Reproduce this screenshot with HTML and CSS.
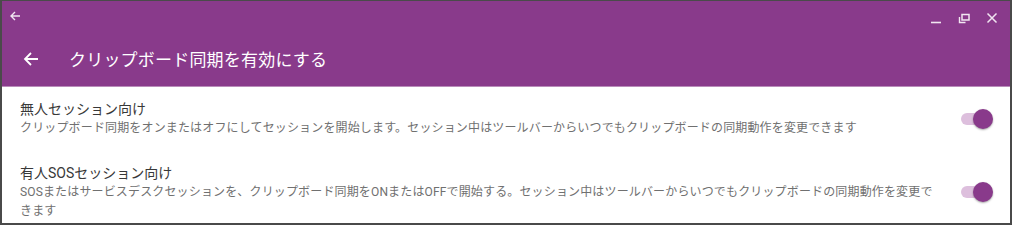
FILE: index.html
```html
<!DOCTYPE html>
<html lang="ja">
<head>
<meta charset="utf-8">
<link rel="stylesheet" href="styles.css">
</head>
<body>
<div class="window">
  <header class="header">
    <div class="titlebar">
      <svg class="tb-back" width="12" height="12" viewBox="0 0 12 12"><path d="M11 6H2M6 2L2 6l4 4" fill="none" stroke="#f1e6f1" stroke-width="1.4"/></svg>
      <div class="controls">
        <svg width="14" height="14" viewBox="0 0 14 14"><path d="M2 11.5h10" stroke="#f1e6f1" stroke-width="1.6"/></svg>
        <svg width="14" height="14" viewBox="0 0 14 14"><path d="M5 3.5h7v5.5H5z" fill="none" stroke="#f1e6f1" stroke-width="1.5"/><path d="M2.5 6v5.5h6" fill="none" stroke="#f1e6f1" stroke-width="1.4"/></svg>
        <svg width="14" height="14" viewBox="0 0 14 14"><path d="M2.5 2.5l9 9M11.5 2.5l-9 9" stroke="#f1e6f1" stroke-width="1.5"/></svg>
      </div>
    </div>
    <div class="appbar">
      <svg class="ab-back" width="16" height="16" viewBox="0 0 16 16"><path d="M15 8H2M8 2L2 8l6 6" fill="none" stroke="#fff" stroke-width="1.8"/></svg>
      <h1 class="title">クリップボード同期を有効にする</h1>
    </div>
  </header>
  <main class="list">
    <div class="item">
      <div class="text">
        <div class="item-title">無人セッション向け</div>
        <div class="item-desc">クリップボード同期をオンまたはオフにしてセッションを開始します。セッション中はツールバーからいつでもクリップボードの同期動作を変更できます</div>
      </div>
      <div class="switch"><span class="track"></span><span class="thumb"></span></div>
    </div>
    <div class="item">
      <div class="text">
        <div class="item-title">有人SOSセッション向け</div>
        <div class="item-desc">SOSまたはサービスデスクセッションを、クリップボード同期をONまたはOFFで開始する。セッション中はツールバーからいつでもクリップボードの同期動作を変更できます</div>
      </div>
      <div class="switch"><span class="track"></span><span class="thumb"></span></div>
    </div>
  </main>
</div>
</body>
</html>
```
FILE: styles.css
```css
* { box-sizing: border-box; }
html, body { margin: 0; padding: 0; background: #fff; }
body {
  font-family: Roboto, "Noto Sans CJK JP", sans-serif;
  width: 1012px;
  height: 225px;
  overflow: hidden;
}
.window {
  width: 1012px;
  height: 225px;
  border: 2px solid #4a4a4a;
  border-top-width: 1px;
  display: flex;
  flex-direction: column;
  background: #fff;
}
.header {
  background: #893a8b;
  border-bottom: 1px solid #b98cba;
  height: 86px;
  flex: none;
  display: flex;
  flex-direction: column;
}
.titlebar {
  height: 30px;
  display: flex;
  align-items: flex-start;
  justify-content: space-between;
  padding: 9px 11px 0 7px;
}
.tb-back { display: block; }
.controls {
  display: flex;
  gap: 14px;
  margin-top: 1px;
}
.controls svg { display: block; }
.appbar {
  flex: 1;
  display: flex;
  align-items: center;
  padding: 0 0 0 21px;
}
.ab-back { display: block; }
.title {
  margin: 0 0 0 30px;
  font-size: 17px;
  font-weight: 400;
  color: #fff;
  letter-spacing: 0.2px;
}
.list {
  flex: 1;
  display: flex;
  flex-direction: column;
  gap: 25px;
  padding: 12px 0 0 18px;
}
.item {
  display: flex;
  align-items: center;
}
.text {
  width: 922px;
}
.item-title {
  font-size: 14px;
  color: #383838;
  line-height: 20px;
}
.item-desc {
  font-size: 12px;
  color: #707070;
  line-height: 19px;
  letter-spacing: 0.15px;
}
.switch {
  position: relative;
  flex: none;
  width: 34px;
  height: 22px;
  margin-left: 17px;
}
.track {
  position: absolute;
  left: 2px;
  top: 5px;
  width: 28px;
  height: 12px;
  border-radius: 6px;
  background: #ddbfdd;
}
.thumb {
  position: absolute;
  left: 14px;
  top: 1px;
  width: 20px;
  height: 20px;
  border-radius: 50%;
  background: #893a8b;
  box-shadow: 0 1px 2px rgba(0,0,0,0.35);
}
```
